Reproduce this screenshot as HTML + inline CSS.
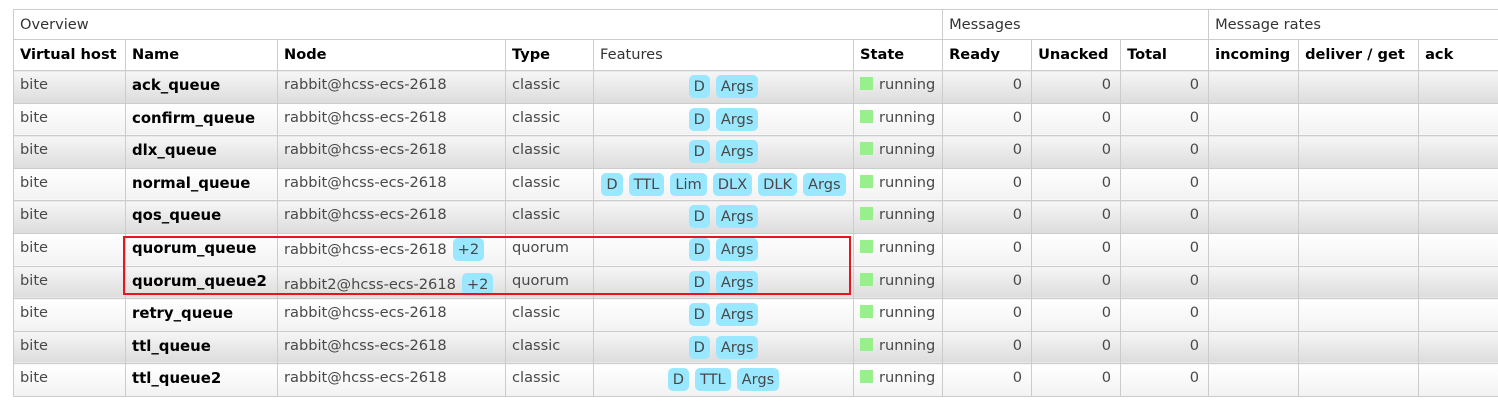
<!DOCTYPE html>
<html><head><meta charset="utf-8"><style>
body{margin:0;background:#fff;width:1498px;height:406px;overflow:hidden;font-family:"DejaVu Sans",Verdana,sans-serif;font-size:14.6px;color:#484848;position:relative}
table{position:absolute;left:13px;top:9px;border-collapse:collapse;table-layout:fixed;width:1600px}
td,th{border:1px solid #ccc;padding:0 6px;vertical-align:top;white-space:nowrap;overflow:hidden;text-align:left}
th{font-weight:bold;color:#000;height:30px;line-height:30px;padding-top:0;box-sizing:border-box}
tr.g th{font-weight:normal;color:#333;line-height:29px}
tr.d td{height:32.6px;line-height:20px;padding-top:4px;box-sizing:border-box}
tr.o td{background:linear-gradient(#f6f6f6,#dcdcdc)}
tr.e td{background:linear-gradient(#fff,#f2f2f2)}
td.n{font-weight:bold;color:#000;font-size:14.9px}
td.r{text-align:right;padding-right:9px}
td.f{text-align:center;padding:4px 0 0 0;line-height:22px;font-size:0}
.b{display:inline-block;background:#99e8ff;border-radius:5px;padding:0 5px;margin:0 3px;font-size:14.6px;line-height:23px;color:#484848}
.sq{display:inline-block;width:13px;height:13px;background:#98f08c;margin-right:6px;vertical-align:-1px}
.box{position:absolute;left:123px;top:236px;width:724px;height:55px;border:2px solid #e8141e}
.p{display:inline-block;background:#99e8ff;border-radius:5px;padding:0 5px;margin-left:6px;line-height:23px}
</style></head><body>
<table>
<colgroup><col style="width:112px"><col style="width:152px"><col style="width:228px"><col style="width:88px"><col style="width:260px"><col style="width:89px"><col style="width:89px"><col style="width:89px"><col style="width:88px"><col style="width:90px"><col style="width:120px"><col style="width:195px"></colgroup>
<tr class="g"><th colspan="6">Overview</th><th colspan="3">Messages</th><th colspan="3">Message rates</th></tr>
<tr><th>Virtual host</th><th>Name</th><th>Node</th><th>Type</th><th style="font-weight:normal;color:#333">Features</th><th>State</th><th>Ready</th><th>Unacked</th><th>Total</th><th>incoming</th><th>deliver / get</th><th>ack</th></tr>
<tr class="d o"><td>bite</td><td class="n">ack_queue</td><td>rabbit@hcss-ecs-2618</td><td>classic</td><td class="f"><span class="b">D</span><span class="b">Args</span></td><td><span class="sq"></span>running</td><td class="r">0</td><td class="r">0</td><td class="r">0</td><td></td><td></td><td></td></tr>
<tr class="d e"><td>bite</td><td class="n">confirm_queue</td><td>rabbit@hcss-ecs-2618</td><td>classic</td><td class="f"><span class="b">D</span><span class="b">Args</span></td><td><span class="sq"></span>running</td><td class="r">0</td><td class="r">0</td><td class="r">0</td><td></td><td></td><td></td></tr>
<tr class="d o"><td>bite</td><td class="n">dlx_queue</td><td>rabbit@hcss-ecs-2618</td><td>classic</td><td class="f"><span class="b">D</span><span class="b">Args</span></td><td><span class="sq"></span>running</td><td class="r">0</td><td class="r">0</td><td class="r">0</td><td></td><td></td><td></td></tr>
<tr class="d e"><td>bite</td><td class="n">normal_queue</td><td>rabbit@hcss-ecs-2618</td><td>classic</td><td class="f"><span class="b">D</span><span class="b">TTL</span><span class="b">Lim</span><span class="b">DLX</span><span class="b">DLK</span><span class="b">Args</span></td><td><span class="sq"></span>running</td><td class="r">0</td><td class="r">0</td><td class="r">0</td><td></td><td></td><td></td></tr>
<tr class="d o"><td>bite</td><td class="n">qos_queue</td><td>rabbit@hcss-ecs-2618</td><td>classic</td><td class="f"><span class="b">D</span><span class="b">Args</span></td><td><span class="sq"></span>running</td><td class="r">0</td><td class="r">0</td><td class="r">0</td><td></td><td></td><td></td></tr>
<tr class="d e"><td>bite</td><td class="n">quorum_queue</td><td>rabbit@hcss-ecs-2618<span class="p">+2</span></td><td>quorum</td><td class="f"><span class="b">D</span><span class="b">Args</span></td><td><span class="sq"></span>running</td><td class="r">0</td><td class="r">0</td><td class="r">0</td><td></td><td></td><td></td></tr>
<tr class="d o"><td>bite</td><td class="n">quorum_queue2</td><td style="padding-top:6px">rabbit2@hcss-ecs-2618<span class="p">+2</span></td><td>quorum</td><td class="f"><span class="b">D</span><span class="b">Args</span></td><td><span class="sq"></span>running</td><td class="r">0</td><td class="r">0</td><td class="r">0</td><td></td><td></td><td></td></tr>
<tr class="d e"><td>bite</td><td class="n">retry_queue</td><td>rabbit@hcss-ecs-2618</td><td>classic</td><td class="f"><span class="b">D</span><span class="b">Args</span></td><td><span class="sq"></span>running</td><td class="r">0</td><td class="r">0</td><td class="r">0</td><td></td><td></td><td></td></tr>
<tr class="d o"><td>bite</td><td class="n">ttl_queue</td><td>rabbit@hcss-ecs-2618</td><td>classic</td><td class="f"><span class="b">D</span><span class="b">Args</span></td><td><span class="sq"></span>running</td><td class="r">0</td><td class="r">0</td><td class="r">0</td><td></td><td></td><td></td></tr>
<tr class="d e"><td>bite</td><td class="n">ttl_queue2</td><td>rabbit@hcss-ecs-2618</td><td>classic</td><td class="f"><span class="b">D</span><span class="b">TTL</span><span class="b">Args</span></td><td><span class="sq"></span>running</td><td class="r">0</td><td class="r">0</td><td class="r">0</td><td></td><td></td><td></td></tr>
</table>
<div class="box"></div>
</body></html>
